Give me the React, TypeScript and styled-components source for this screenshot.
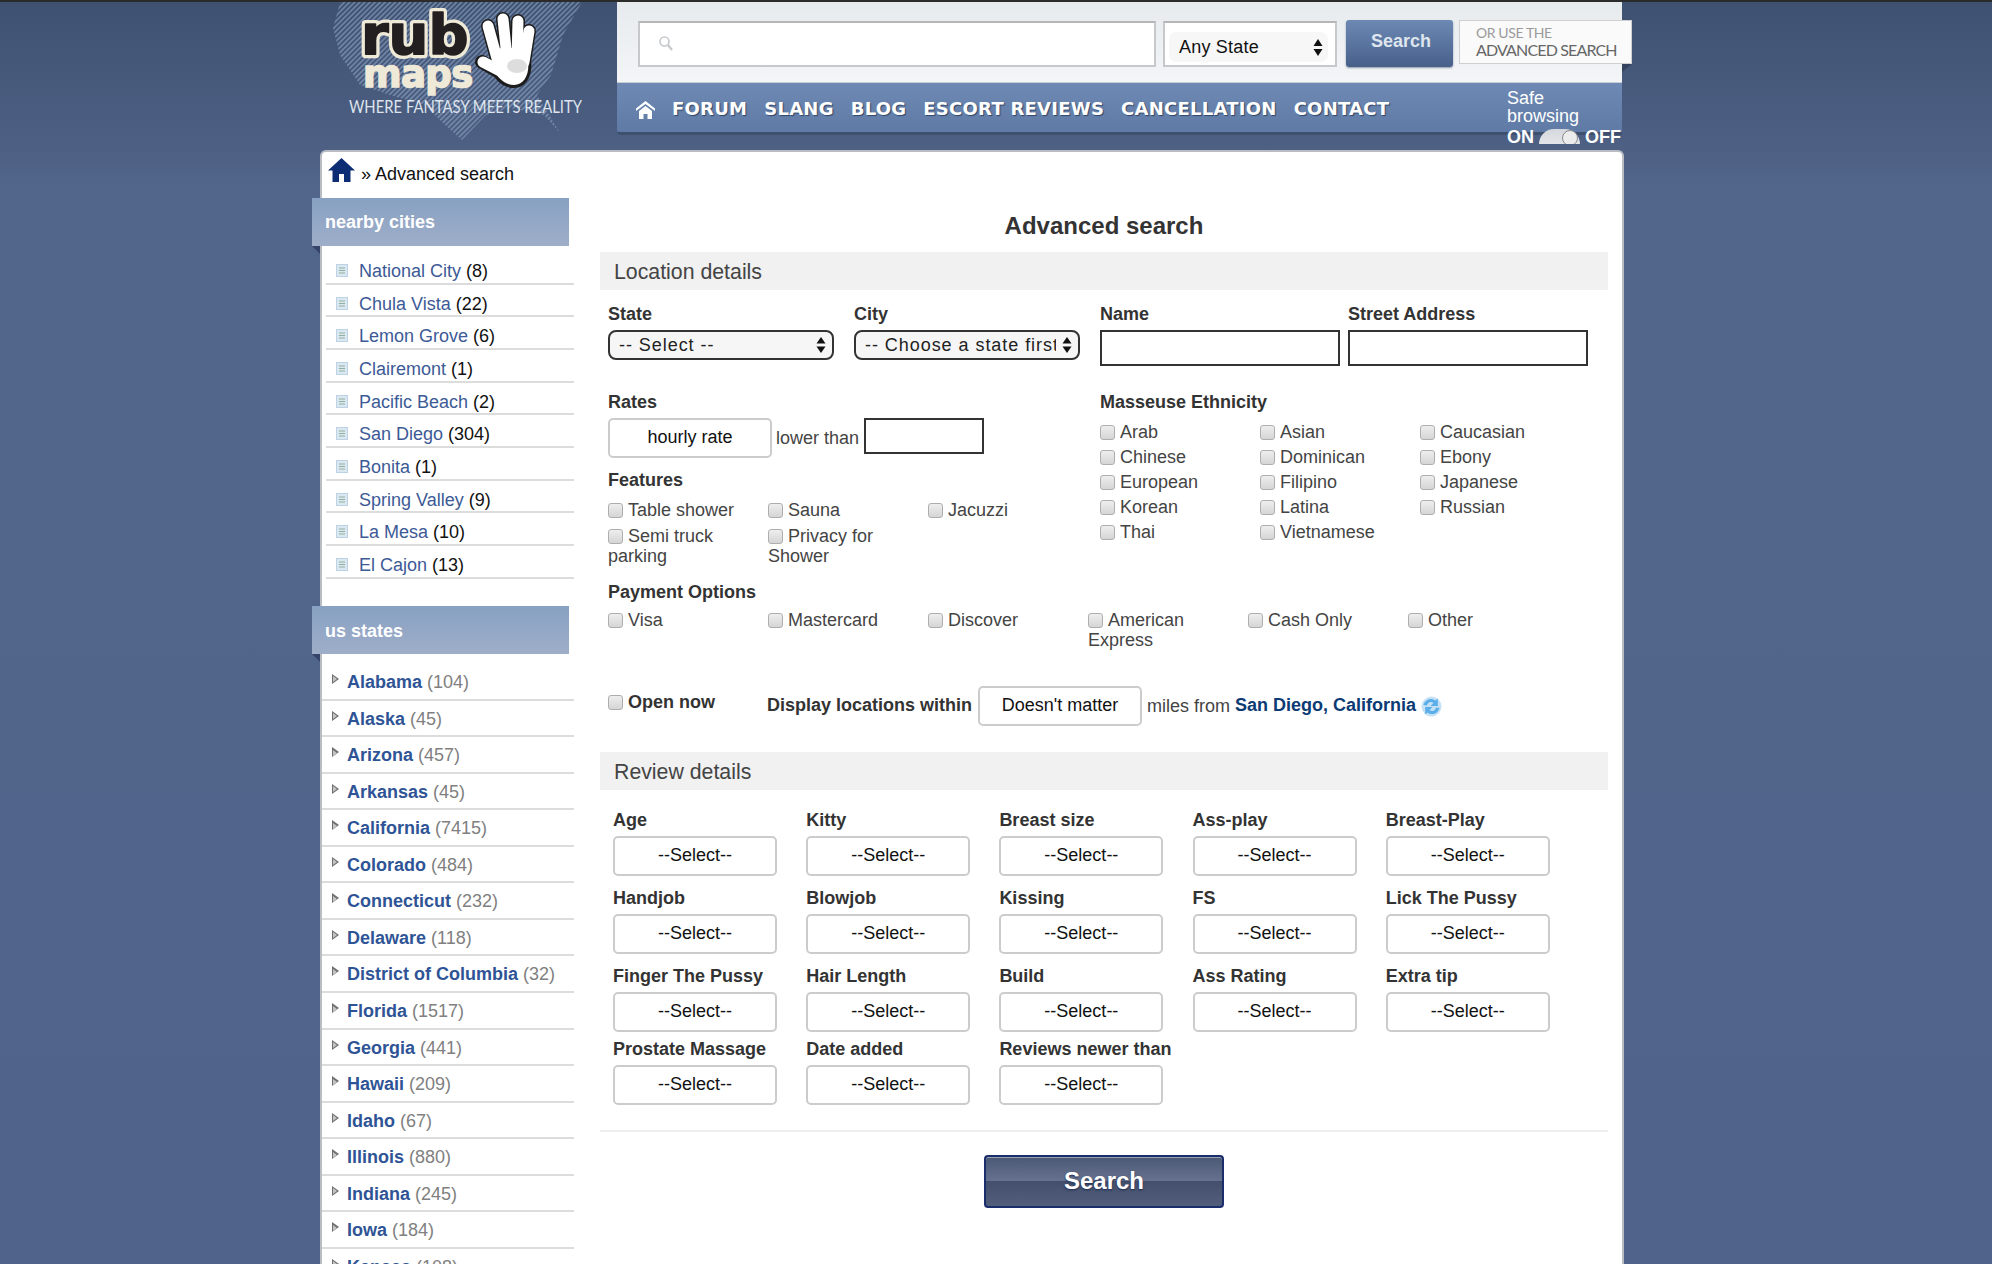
import React from "react";
import styled, { createGlobalStyle } from "styled-components";

const GlobalStyle = createGlobalStyle`
  * { box-sizing: border-box; }
  html, body { margin: 0; height: 100%; overflow: hidden; }
  body {
    font-family: "Liberation Sans", Arial, sans-serif;
    font-size: 18px;
    background: linear-gradient(#3e5171 0, #52658a 190px, #50638a 100%);
  }
`;

const Page = styled.div`
  height: 1264px;
  overflow: hidden;
`;

const TopStrip = styled.div`
  height: 2px;
  background: #2b2b2b;
`;

const Wrapper = styled.div`
  width: 1304px;
  margin-left: 320px;
`;

const Header = styled.header`
  display: flex;
  height: 148px;
`;

const LogoArt = styled.svg`
  flex: 0 0 297px;
  display: block;
`;

const HeaderPanel = styled.div`
  width: 1005px;
  position: relative;
`;

const SearchBand = styled.div`
  display: flex;
  align-items: flex-start;
  height: 81px;
  padding: 19px 0 0 21px;
  background: linear-gradient(#e7ebee, #f3f5f7);
  border-bottom: 1px solid #c9ced4;
`;

const SearchField = styled.div`
  flex: 0 0 518px;
  height: 46px;
  display: flex;
  align-items: center;
  padding-left: 18px;
  background: #fff;
  border: 2px solid #c6c8ca;
  border-top-color: #b4b6b8;
`;

const StateField = styled.div`
  flex: 0 0 174px;
  height: 46px;
  margin-left: 7px;
  padding: 9px 7px 3px 4px;
  background: #fff;
  border: 2px solid #c6c8ca;
  border-top-color: #b4b6b8;
`;

const StatePill = styled.div`
  height: 100%;
  padding: 0 5px 0 10px;
  display: flex;
  align-items: center;
  justify-content: space-between;
  background: #f7f7f7;
  border-radius: 7px;
  color: #111;
  letter-spacing: 0.2px;
`;

const SearchButton = styled.button`
  flex: 0 0 107px;
  height: 47px;
  margin: -1px 0 0 9px;
  padding: 0 0 4px 3px;
  border: 0;
  border-radius: 3px;
  background: linear-gradient(#6c89b4, #47608a);
  box-shadow: 0 1px 2px #8d98a8;
  color: #dfe5ee;
  font: bold 18px "Liberation Sans", Arial, sans-serif;
`;

const AdvancedLink = styled.div`
  flex: 0 0 173px;
  height: 44px;
  margin: -1px 0 0 6px;
  padding: 5px 0 0 16px;
  position: relative;
  background: #fafafa;
  border: 1px solid #cfcfcf;
  font-family: Lato, "Liberation Sans", sans-serif;

  &::after {
    content: "";
    position: absolute;
    right: -1px;
    top: 43px;
    border-top: 8px solid #34445f;
    border-right: 10px solid transparent;
  }
`;

const AdvancedSmall = styled.div`
  font-size: 14px;
  line-height: 14px;
  letter-spacing: -0.4px;
  color: #9a9a9a;
`;

const AdvancedBig = styled.div`
  margin-top: 1px;
  font-size: 16px;
  line-height: 17px;
  letter-spacing: -0.85px;
  color: #666;
  white-space: nowrap;
`;

const NavBand = styled.nav`
  display: flex;
  align-items: center;
  height: 52px;
  padding: 1px 0 0 19px;
  background: linear-gradient(#6e8ab4, #5f7aa4);
  border-bottom: 3px solid #3f506f;
  border-radius: 0 0 0 4px;
`;

const NavLink = styled.a`
  margin-left: 17px;
  font: bold 18px "DejaVu Sans", Verdana, sans-serif;
  letter-spacing: 0.25px;
  color: #fff;
  text-shadow: 1px 1px 1px #2f4568;
  white-space: nowrap;
`;

const SafeBrowsing = styled.div`
  align-self: flex-start;
  margin: 5px 0 0 auto;
  width: 115px;
  font-size: 18px;
  line-height: 18px;
  color: #fff;
`;

const SafeSwitchRow = styled.div`
  display: flex;
  align-items: flex-start;
  height: 18px;
  margin-top: 3px;
  font-weight: bold;
  line-height: 18px;
`;

const SafeClip = styled.div`
  width: 41px;
  height: 15px;
  margin: 1px 5px 0 5px;
  overflow: hidden;
`;

const SafeTrack = styled.div`
  position: relative;
  width: 41px;
  height: 30px;
  border-radius: 15px;
  background: linear-gradient(#d4d7dc, #f2f3f5);
`;

const SafeKnob = styled.div`
  position: absolute;
  right: 2px;
  top: 1px;
  width: 16px;
  height: 16px;
  border: 1.5px solid #8b8b8b;
  border-radius: 50%;
  background: #ececec;
`;

const Card = styled.main`
  background: #fff;
  border: 2px solid #b9bcc2;
  border-bottom: 0;
  border-radius: 6px 6px 0 0;
  height: 1200px;
`;

const Breadcrumb = styled.div`
  display: flex;
  align-items: center;
  height: 46px;
  padding: 0 0 1px 6px;
  color: #111;
  gap: 6px;
`;

const HomeGlyph = styled.svg`
  margin-top: -9px;
`;

const Columns = styled.div`
  display: flex;
  align-items: flex-start;
`;

const Sidebar = styled.aside`
  flex: 0 0 262px;
  margin-left: -10px;
`;

const SideHead = styled.h3<{ $top?: number }>`
  position: relative;
  width: 257px;
  height: 48px;
  margin: ${(p) => p.$top || 0}px 0 0;
  padding: 0 0 0 13px;
  line-height: ${(p) => (p.$top ? 50 : 48)}px;
  font-size: 18px;
  font-weight: bold;
  color: #fff;
  background: linear-gradient(#88a1c2, #9eaec9);

  &::after {
    content: "";
    position: absolute;
    left: 0;
    top: 48px;
    border-top: 8px solid #35456a;
    border-left: 8px solid transparent;
  }
`;

const CityList = styled.ul`
  list-style: none;
  margin: 6px 0 0 14px;
  padding: 0;
`;

const CityRow = styled.li`
  display: flex;
  height: 32.67px;
  padding: 8px 0 0 10px;
  line-height: 22px;
  border-bottom: 2px solid #dcdcdc;
  color: #111;
`;

const CityIcon = styled.svg`
  flex: 0 0 12px;
  height: 13px;
  margin: 4px 11px 0 0;
`;

const CityLink = styled.a`
  color: #3c5a96;
  margin-right: 5px;
`;

const StateList = styled.ul`
  list-style: none;
  margin: 10.4px 0 0 10px;
  padding: 0;
`;

const StateRow = styled.li`
  position: relative;
  height: 36.57px;
  padding: 7px 0 0 25px;
  line-height: 22px;
  border-bottom: 2px solid #dcdcdc;
  color: #808080;
  white-space: nowrap;

  &::before {
    content: "";
    position: absolute;
    left: 10px;
    top: 10px;
    border-left: 7px solid #6f6f6f;
    border-top: 5.5px solid transparent;
    border-bottom: 5.5px solid transparent;
  }

  &::after {
    content: "";
    position: absolute;
    left: 11px;
    top: 12.5px;
    border-left: 4px solid #c4c4c4;
    border-top: 3px solid transparent;
    border-bottom: 3px solid transparent;
  }
`;

const StateLink = styled.a`
  font-weight: bold;
  color: #2f5496;
  margin-right: 5px;
`;

const Form = styled.form`
  flex: 0 0 1008px;
  margin: -46px 0 0 26px;
  padding-top: 46px;
`;

const Title = styled.h1`
  height: 54px;
  margin: 0;
  padding-top: 14px;
  line-height: 28px;
  text-align: center;
  font-size: 24px;
  font-weight: bold;
  color: #333;
`;

const SectionBar = styled.h2<{ $top?: number }>`
  height: 38px;
  margin: ${(p) => p.$top || 0}px 0 0;
  padding-left: 14px;
  line-height: 41px;
  font-size: 21.3px;
  font-weight: normal;
  color: #444;
  background: #f1f1f1;
`;

const LocationBody = styled.div`
  padding: 12px 0 0 8px;
`;

const TopFields = styled.div`
  display: grid;
  grid-template-columns: 246px 246px 248px 240px;
`;

const Label = styled.div`
  height: 22px;
  line-height: 22px;
  font-weight: bold;
  font-size: 18px;
  color: #333;
  white-space: nowrap;
`;

const FieldLabel = styled(Label)`
  line-height: 24px;
`;

const SelectBox = styled.div`
  position: relative;
  width: 226px;
  margin-top: 6px;
`;

const RoundSelect = styled.select`
  display: block;
  width: 226px;
  height: 30px;
  padding: 0 22px 0 9px;
  appearance: none;
  background: #f6f6f6;
  border: 2px solid #333;
  border-radius: 8px;
  color: #222;
  font: 18px "Liberation Sans", Arial, sans-serif;
  letter-spacing: 0.95px;
`;

const StepperSlot = styled.svg`
  position: absolute;
  right: 8px;
  top: 7px;
`;

const TextInput = styled.input<{ $w: number; $h: number }>`
  display: block;
  width: ${(p) => p.$w}px;
  height: ${(p) => p.$h}px;
  background: #fff;
  border: 2px solid #333;
  border-radius: 0;
`;

const TopInput = styled(TextInput)`
  margin-top: 6px;
`;

const MidColumns = styled.div`
  display: flex;
  margin-top: 25px;
`;

const LeftBlock = styled.div`
  flex: 0 0 492px;
`;

const RateRow = styled.div`
  display: flex;
  align-items: flex-start;
  margin-top: 5px;
`;

const LowerText = styled.span`
  margin: 9px 5px 0 4px;
  line-height: 22px;
  color: #444;
`;

const GreySelect = styled.select<{ $w: number }>`
  display: block;
  width: ${(p) => p.$w}px;
  height: 40px;
  flex-shrink: 0;
  padding: 0 0 2px;
  appearance: none;
  background: #fff;
  border: 2px solid #ccc;
  border-radius: 5px;
  color: #111;
  font: 18px "Liberation Sans", Arial, sans-serif;
  text-align: center;
  text-align-last: center;
`;

const SubLabel = styled(Label)<{ $top: number }>`
  margin-top: ${(p) => p.$top}px;
`;

const CheckGrid = styled.div<{ $cols: number; $top: number; $gap: number }>`
  display: grid;
  grid-template-columns: repeat(${(p) => p.$cols}, 160px);
  row-gap: ${(p) => p.$gap}px;
  margin-top: ${(p) => p.$top}px;
`;

const CheckItem = styled.label`
  display: block;
  padding-right: 30px;
  font-size: 18px;
  line-height: 20px;
  color: #444;
`;

const Tick = styled.input.attrs({ type: "checkbox" })`
  appearance: none;
  display: inline-block;
  width: 15px;
  height: 15px;
  margin: 0 5px 0 0;
  vertical-align: -2px;
  background: linear-gradient(#eeeeee, #d5d5d5);
  border: 1px solid #aeaeae;
  border-radius: 3px;
`;

const ProximityRow = styled.div`
  display: flex;
  align-items: center;
  height: 40px;
  margin-top: 36px;
  white-space: nowrap;
`;

const OpenNow = styled.label`
  flex: 0 0 159px;
  margin-top: -7px;
  font-weight: bold;
  color: #333;
`;

const ProximityLabel = styled.span`
  margin: -2px 6px 0 0;
  font-weight: bold;
  color: #333;
`;

const MilesText = styled.span`
  margin-left: 5px;
  color: #444;
`;

const PlaceLink = styled.a`
  margin: -1px 5px 0 5px;
  font-weight: bold;
  color: #0c3b74;
`;

const ReviewGrid = styled.div`
  display: grid;
  grid-template-columns: repeat(5, 193.2px);
  grid-template-rows: 78px 78px 72.5px 68px;
  padding: 18px 0 0 13px;
`;

const ReviewCell = styled.div`
  display: flex;
  flex-direction: column;
  gap: 6px;
`;

const Divider = styled.hr`
  height: 2px;
  margin: 25px 0 0;
  border: 0;
  background: #eee;
`;

const SubmitRow = styled.div`
  display: flex;
  justify-content: center;
  margin-top: 23px;
`;

const SubmitButton = styled.button`
  width: 240px;
  height: 53px;
  padding: 0;
  border: 2px solid #1a2e6c;
  border-radius: 4px;
  background: linear-gradient(#4b5874 0, #66728f 49%, #434f6b 50%, #525e7b 100%);
  box-shadow: inset 0 1px 0 #9aa3b6;
  color: #fff;
  font: bold 24px "Liberation Sans", Arial, sans-serif;
  text-shadow: 0 1px 2px #1c2a4d;
`;

const navItems = ["FORUM", "SLANG", "BLOG", "ESCORT REVIEWS", "CANCELLATION", "CONTACT"];

const cities: [string, number][] = [
  ["National City", 8],
  ["Chula Vista", 22],
  ["Lemon Grove", 6],
  ["Clairemont", 1],
  ["Pacific Beach", 2],
  ["San Diego", 304],
  ["Bonita", 1],
  ["Spring Valley", 9],
  ["La Mesa", 10],
  ["El Cajon", 13],
];

const states: [string, number][] = [
  ["Alabama", 104],
  ["Alaska", 45],
  ["Arizona", 457],
  ["Arkansas", 45],
  ["California", 7415],
  ["Colorado", 484],
  ["Connecticut", 232],
  ["Delaware", 118],
  ["District of Columbia", 32],
  ["Florida", 1517],
  ["Georgia", 441],
  ["Hawaii", 209],
  ["Idaho", 67],
  ["Illinois", 880],
  ["Indiana", 245],
  ["Iowa", 184],
  ["Kansas", 108],
];

const ethnicities = [
  "Arab", "Asian", "Caucasian",
  "Chinese", "Dominican", "Ebony",
  "European", "Filipino", "Japanese",
  "Korean", "Latina", "Russian",
  "Thai", "Vietnamese",
];

const features = ["Table shower", "Sauna", "Jacuzzi", "Semi truck parking", "Privacy for Shower"];
const payments = ["Visa", "Mastercard", "Discover", "American Express", "Cash Only", "Other"];

const reviewFields = [
  "Age", "Kitty", "Breast size", "Ass-play", "Breast-Play",
  "Handjob", "Blowjob", "Kissing", "FS", "Lick The Pussy",
  "Finger The Pussy", "Hair Length", "Build", "Ass Rating", "Extra tip",
  "Prostate Massage", "Date added", "Reviews newer than",
];

function Logo() {
  return (
    <LogoArt viewBox="0 2 297 148" width={297} height={148}>
      <defs>
        <pattern id="hatch" width="3.6" height="3.6" patternUnits="userSpaceOnUse" patternTransform="rotate(-45)">
          <rect width="3.6" height="1.7" fill="#8fa4c4" />
        </pattern>
      </defs>
      <path
        d="M20 2L262 2L243 35L231 75L217 95L240 133L224 115L190 108L166 115L142 140L125 125L105 105L70 95L40 85L20 55L13 28Z"
        fill="url(#hatch)"
        opacity="0.6"
      />
      <g fontFamily="'DejaVu Sans', sans-serif" fontWeight="bold" fontSize="56" letterSpacing="0">
        <text x="41" y="54" fill="#efe9d8" stroke="#efe9d8" strokeWidth="8" strokeLinejoin="round">rub</text>
        <text x="41" y="54" fill="#231f20" stroke="#231f20" strokeWidth="1.6" strokeLinejoin="round">rub</text>
      </g>
      <text x="43" y="87" fill="#efe9d8" stroke="#efe9d8" strokeWidth="1.6" fontFamily="'DejaVu Sans', sans-serif" fontWeight="bold" fontSize="37" letterSpacing="-0.6">maps</text>
      <g strokeLinecap="round" fill="none" stroke="#1d1c1c" strokeWidth="14">
        <path d="M178 62L168 26" />
        <path d="M187 58L183 19" />
        <path d="M197 58L198 21" />
        <path d="M204 62L209 31" />
        <path d="M190 78L162 62" />
      </g>
      <path d="M173 48C186 42 208 46 211 60C213 76 206 88 194 88C182 88 172 78 170 66Z" fill="#1d1c1c" />
      <g strokeLinecap="round" fill="none" stroke="#fff" strokeWidth="11">
        <path d="M178 62L168 26" />
        <path d="M187 58L183 19" />
        <path d="M197 58L198 21" />
        <path d="M204 62L209 31" />
        <path d="M190 76L163 62" />
      </g>
      <path d="M175 50C186 45 206 48 208 60C210 74 204 85 194 85C184 85 175 76 173 66Z" fill="#fff" />
      <ellipse cx="197" cy="66" rx="10" ry="7" fill="#cfcfcf" opacity="0.7" />
      <text x="29" y="113" fill="#dfe5ee" fontFamily="Lato, 'Liberation Sans', sans-serif" fontSize="17" textLength="233" lengthAdjust="spacingAndGlyphs">
        WHERE FANTASY MEETS REALITY
      </text>
    </LogoArt>
  );
}

function Stepper() {
  return (
    <svg width="10" height="17" viewBox="0 0 10 17">
      <path d="M5 0L9.5 7H.5Z M5 17L.5 10H9.5Z" fill="#111" />
    </svg>
  );
}

function SmallStepper() {
  return (
    <StepperSlot width="10" height="16" viewBox="0 0 10 16">
      <path d="M5 0L9.5 6.5H.5Z M5 16L.5 9.5H9.5Z" fill="#111" />
    </StepperSlot>
  );
}

function RefreshIcon() {
  return (
    <svg width="21" height="21" viewBox="0 0 21 21">
      <circle cx="10.5" cy="10.5" r="10" fill="#c6e1f6" />
      <path d="M2.5 9C4 3.5 10 1 14.5 4.5L16.8 2.5V10H9.5L12.5 7C10 5 6.5 6 6 9.5Z" fill="#5aaeea" />
      <path d="M18.5 12C17 17.5 11 20 6.5 16.5L4.2 18.5V11H11.5L8.5 14C11 16 14.5 15 15 11.5Z" fill="#5aaeea" />
    </svg>
  );
}

export default function App() {
  return (
    <Page>
      <GlobalStyle />
      <TopStrip />
      <Wrapper>
        <Header>
          <Logo />
          <HeaderPanel>
            <SearchBand>
              <SearchField>
                <svg width="16" height="18" viewBox="0 0 16 18">
                  <circle cx="6.5" cy="6.5" r="4.5" fill="none" stroke="#c5c9cd" strokeWidth="1.6" />
                  <path d="M10 10L14 15" stroke="#c5c9cd" strokeWidth="2.2" />
                </svg>
              </SearchField>
              <StateField>
                <StatePill>
                  Any State
                  <Stepper />
                </StatePill>
              </StateField>
              <SearchButton type="button">Search</SearchButton>
              <AdvancedLink>
                <AdvancedSmall>OR USE THE</AdvancedSmall>
                <AdvancedBig>ADVANCED SEARCH</AdvancedBig>
              </AdvancedLink>
            </SearchBand>
            <NavBand>
              <svg width="19" height="18" viewBox="0 0 19 18" style={{ marginTop: 4 }}>
                <path d="M9.5 0L19 7.5V10L9.5 3L0 10V7.5Z M9.5 5L16 10V18H11.5V13H7.5V18H3V10Z" fill="#fff" />
              </svg>
              {navItems.map((item) => (
                <NavLink key={item}>{item}</NavLink>
              ))}
              <SafeBrowsing>
                Safe
                <br />
                browsing
                <SafeSwitchRow>
                  ON
                  <SafeClip>
                    <SafeTrack>
                      <SafeKnob />
                    </SafeTrack>
                  </SafeClip>
                  OFF
                </SafeSwitchRow>
              </SafeBrowsing>
            </NavBand>
          </HeaderPanel>
        </Header>
        <Card>
          <Breadcrumb>
            <HomeGlyph width="27" height="24" viewBox="0 0 27 24">
              <path d="M13.5 0L27 12.5H22.5V24H16V16H11V24H4.5V12.5H0Z" fill="#0c2d74" />
            </HomeGlyph>
            » Advanced search
          </Breadcrumb>
          <Columns>
            <Sidebar>
              <SideHead>nearby cities</SideHead>
              <CityList>
                {cities.map(([name, count]) => (
                  <CityRow key={name}>
                    <CityIcon viewBox="0 0 12 13">
                      <rect width="12" height="13" fill="#bcd3e6" />
                      <rect x="1" y="1" width="10" height="11" fill="#dbe7f1" />
                      <path d="M3 4H9M3 6.5H9M3 9H9" stroke="#8fb0a0" strokeWidth="1" />
                    </CityIcon>
                    <CityLink>{name}</CityLink>({count})
                  </CityRow>
                ))}
              </CityList>
              <SideHead $top={27}>us states</SideHead>
              <StateList>
                {states.map(([name, count]) => (
                  <StateRow key={name}>
                    <StateLink>{name}</StateLink>({count})
                  </StateRow>
                ))}
              </StateList>
            </Sidebar>
            <Form>
              <Title>Advanced search</Title>
              <SectionBar>Location details</SectionBar>
              <LocationBody>
                <TopFields>
                  <div>
                    <FieldLabel>State</FieldLabel>
                    <SelectBox>
                      <RoundSelect>
                        <option>-- Select --</option>
                      </RoundSelect>
                      <SmallStepper />
                    </SelectBox>
                  </div>
                  <div>
                    <FieldLabel>City</FieldLabel>
                    <SelectBox>
                      <RoundSelect>
                        <option>-- Choose a state first --</option>
                      </RoundSelect>
                      <SmallStepper />
                    </SelectBox>
                  </div>
                  <div>
                    <FieldLabel>Name</FieldLabel>
                    <TopInput $w={240} $h={36} />
                  </div>
                  <div>
                    <FieldLabel>Street Address</FieldLabel>
                    <TopInput $w={240} $h={36} />
                  </div>
                </TopFields>
                <MidColumns>
                  <LeftBlock>
                    <Label>Rates</Label>
                    <RateRow>
                      <GreySelect $w={164}>
                        <option>hourly rate</option>
                      </GreySelect>
                      <LowerText>lower than</LowerText>
                      <TextInput $w={120} $h={36} />
                    </RateRow>
                    <SubLabel $top={11}>Features</SubLabel>
                    <CheckGrid $cols={3} $top={9} $gap={6}>
                      {features.map((f) => (
                        <CheckItem key={f}>
                          <Tick />
                          {f}
                        </CheckItem>
                      ))}
                    </CheckGrid>
                  </LeftBlock>
                  <div>
                    <Label>Masseuse Ethnicity</Label>
                    <CheckGrid $cols={3} $top={9} $gap={5}>
                      {ethnicities.map((e) => (
                        <CheckItem key={e}>
                          <Tick />
                          {e}
                        </CheckItem>
                      ))}
                    </CheckGrid>
                  </div>
                </MidColumns>
                <SubLabel $top={15}>Payment Options</SubLabel>
                <CheckGrid $cols={6} $top={7} $gap={0}>
                  {payments.map((p) => (
                    <CheckItem key={p}>
                      <Tick />
                      {p}
                    </CheckItem>
                  ))}
                </CheckGrid>
                <ProximityRow>
                  <OpenNow>
                    <Tick />
                    Open now
                  </OpenNow>
                  <ProximityLabel>Display locations within</ProximityLabel>
                  <GreySelect $w={164}>
                    <option>Doesn't matter</option>
                  </GreySelect>
                  <MilesText>miles from</MilesText>
                  <PlaceLink>San Diego, California</PlaceLink>
                  <RefreshIcon />
                </ProximityRow>
              </LocationBody>
              <SectionBar $top={26}>Review details</SectionBar>
              <ReviewGrid>
                {reviewFields.map((field) => (
                  <ReviewCell key={field}>
                    <FieldLabel>{field}</FieldLabel>
                    <GreySelect $w={164}>
                      <option>--Select--</option>
                    </GreySelect>
                  </ReviewCell>
                ))}
              </ReviewGrid>
              <Divider />
              <SubmitRow>
                <SubmitButton type="button">Search</SubmitButton>
              </SubmitRow>
            </Form>
          </Columns>
        </Card>
      </Wrapper>
    </Page>
  );
}
